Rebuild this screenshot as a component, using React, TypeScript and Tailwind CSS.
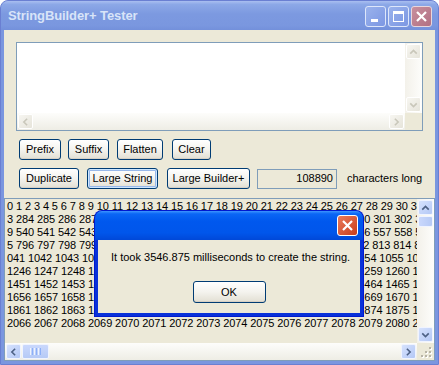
import React from 'react';

type Dir = 'up' | 'down' | 'left' | 'right';

const chevronPoints: Record<Dir, string> = {
  up: '4,10 8,6 12,10',
  down: '4,6 8,10 12,6',
  left: '10,4 6,8 10,12',
  right: '6,4 10,8 6,12',
};

const Chevron = ({ dir, color }: { dir: Dir; color: string }) => (
  <svg width="16" height="16" viewBox="0 0 16 16">
    <polyline points={chevronPoints[dir]} fill="none" stroke={color} strokeWidth="2" />
  </svg>
);

// luna scroll arrow button, blue when live, beige when the box is empty
const ScrollBtn = ({ dir, disabled }: { dir: Dir; disabled?: boolean }) => (
  <div className="w-[17px] h-[17px] p-px shrink-0">
    <div
      className={
        disabled
          ? 'w-full h-full rounded-[2px] border border-white bg-gradient-to-br from-[#F7F6F1] to-[#E6E4DA] flex items-center justify-center'
          : 'w-full h-full rounded-[2px] border border-[#F0F4FF] bg-gradient-to-br from-[#D6E2FD] to-[#B4C8F6] flex items-center justify-center'
      }
    >
      <Chevron dir={dir} color={disabled ? '#C9C7BA' : '#4D6185'} />
    </div>
  </div>
);

const XpButton = ({ label, className, focused }: { label: string; className: string; focused?: boolean }) => (
  <button
    className={`${className} h-[21px] shrink-0 rounded-[3px] border border-[#003C74] bg-gradient-to-b from-white via-[#F4F3EE] to-[#E2DFD3] text-[11px] leading-none text-black ${
      focused ? 'shadow-[inset_0_0_0_1px_#CEE7FF,inset_0_0_0_2px_#98B8EA]' : 'shadow-[inset_0_-1px_0_#D6D0C5]'
    }`}
  >
    {label}
  </button>
);

// the edit box breaks every 1024 chars and swallows a space at the break
const buildLines = () => {
  let s = '';
  for (let i = 0; s.length < 1100 * 10; i++) s += i + ' ';
  const lines: string[] = [];
  let pos = 0;
  for (let k = 0; k < 10; k++) {
    lines.push(s.slice(pos, pos + 110));
    pos += 1024;
    if (s[pos] === ' ') pos++;
  }
  return lines;
};

const lines = buildLines();

const Grip = () => (
  <svg width="17" height="17" viewBox="0 0 17 17">
    {[
      [12, 4],
      [8, 8],
      [12, 8],
      [4, 12],
      [8, 12],
      [12, 12],
    ].map(([x, y]) => (
      <g key={`${x}-${y}`}>
        <rect x={x + 1} y={y + 1} width="2" height="2" fill="#FFFFFF" />
        <rect x={x} y={y} width="2" height="2" fill="#B8B4A6" />
      </g>
    ))}
  </svg>
);

export default function App() {
  return (
    <div className="w-[439px] h-[365px] font-['Liberation_Sans',Arial,sans-serif] text-[11px] text-black">
      <div className="relative w-full h-full flex flex-col rounded-t-[8px] overflow-hidden bg-[#7A96DF] border border-[#6A7FD2]">
        {/* title bar (inactive) */}
        <div className="h-[29px] shrink-0 flex items-center pl-[7px] pr-[6px] bg-[linear-gradient(to_bottom,#A9BEF0_0%,#8CA8E7_12%,#7C99E0_45%,#7A97DF_85%,#7390DB_100%)]">
          <span className="text-[13px] font-bold text-[#D8E4F8] tracking-[-0.1px] mt-[1px]">StringBuilder+ Tester</span>
          <div className="ml-auto flex gap-[2px] mt-[1px]">
            <div className="w-[21px] h-[21px] rounded-[3px] border border-[#DDE6FA] bg-gradient-to-br from-[#9AB2EC] to-[#7C97E3] flex items-end pl-[5px] pb-[4px]">
              <div className="w-[7px] h-[3px] bg-white" />
            </div>
            <div className="w-[21px] h-[21px] rounded-[3px] border border-[#DDE6FA] bg-gradient-to-br from-[#9AB2EC] to-[#7C97E3] flex items-center justify-center">
              <div className="w-[11px] h-[11px] border border-white border-t-[3px]" />
            </div>
            <div className="w-[21px] h-[21px] rounded-[3px] border border-[#E8D6DC] bg-gradient-to-br from-[#C8909E] to-[#B27083] flex items-center justify-center">
              <svg width="13" height="13" viewBox="0 0 13 13">
                <path d="M2 2 L11 11 M11 2 L2 11" stroke="white" strokeWidth="2.2" />
              </svg>
            </div>
          </div>
        </div>

        {/* client area */}
        <div className="flex-1 mx-[3px] mb-[3px] bg-[#ECE9D8] flex flex-col">
          {/* input box, empty */}
          <div className="mt-[12px] ml-[12px] w-[407px] h-[89px] border border-[#7F9DB9] bg-white flex flex-col">
            <div className="flex-1 flex">
              <div className="flex-1" />
              <div className="w-[17px] flex flex-col justify-between bg-gradient-to-r from-[#F3F1EA] to-[#FDFDFB]">
                <ScrollBtn dir="up" disabled />
                <ScrollBtn dir="down" disabled />
              </div>
            </div>
            <div className="h-[17px] flex">
              <div className="flex-1 flex justify-between bg-gradient-to-b from-[#FDFDFB] to-[#EEEDE5]">
                <ScrollBtn dir="left" disabled />
                <ScrollBtn dir="right" disabled />
              </div>
              <div className="w-[17px] bg-[#ECE9D8]" />
            </div>
          </div>

          <div className="mt-[8px] ml-[15px] flex items-center">
            <XpButton label="Prefix" className="w-[42px]" />
            <XpButton label="Suffix" className="ml-[7px] w-[41px]" />
            <XpButton label="Flatten" className="ml-[8px] w-[46px]" />
            <XpButton label="Clear" className="ml-[9px] w-[39px]" />
          </div>

          <div className="mt-[8px] ml-[15px] flex items-center">
            <XpButton label="Duplicate" className="w-[60px]" />
            <XpButton label="Large String" className="ml-[8px] w-[71px]" focused />
            <XpButton label="Large Builder+" className="ml-[9px] w-[83px]" />
            <div className="ml-[7px] w-[80px] h-[20px] border border-[#7F9DB9] bg-[#ECE9D8] flex items-center justify-end pr-[3px]">
              108890
            </div>
            <span className="ml-[10px]">characters long</span>
          </div>

          {/* output box */}
          <div className="mt-[9px] flex-1 border border-[#7F9DB9] bg-[#ECE9D8] flex flex-col min-h-0">
            <div className="flex-1 flex min-h-0">
              <div className="flex-1 overflow-hidden pl-[2px] pt-px tracking-[-0.1px]">
                {lines.map((l, i) => (
                  <div key={i} className="h-[13px] leading-[13px] whitespace-pre">
                    {l}
                  </div>
                ))}
              </div>
              <div className="w-[17px] flex flex-col bg-gradient-to-r from-[#F3F1EA] to-[#FDFDFB]">
                <ScrollBtn dir="up" />
                <div className="h-[11px] px-px">
                  <div className="w-full h-full rounded-[2px] border border-[#F0F4FF] bg-gradient-to-r from-[#CAD8FC] to-[#B6CAF6]" />
                </div>
                <div className="flex-1" />
                <ScrollBtn dir="down" />
              </div>
            </div>
            <div className="h-[17px] flex">
              <div className="flex-1 flex bg-gradient-to-b from-[#FDFDFB] to-[#EEEDE5]">
                <ScrollBtn dir="left" />
                <div className="w-[27px] py-px">
                  <div className="w-full h-full rounded-[2px] border border-[#F0F4FF] bg-gradient-to-b from-[#CAD8FC] to-[#B6CAF6] flex items-center justify-center gap-px">
                    <div className="w-px h-[7px] bg-[#EEF4FE]" />
                    <div className="w-px h-[7px] bg-[#8CB0F8]" />
                    <div className="w-px h-[7px] bg-[#EEF4FE]" />
                    <div className="w-px h-[7px] bg-[#8CB0F8]" />
                    <div className="w-px h-[7px] bg-[#EEF4FE]" />
                    <div className="w-px h-[7px] bg-[#8CB0F8]" />
                  </div>
                </div>
                <div className="flex-1" />
                <ScrollBtn dir="right" />
              </div>
              <div className="w-[17px] bg-[#ECE9D8]">
                <Grip />
              </div>
            </div>
          </div>
        </div>

        {/* message box over the output */}
        <div className="absolute left-[94px] top-[210px] w-[268px] h-[105px] flex flex-col rounded-t-[7px] overflow-hidden bg-[#0831D9] shadow-[0_0_0_1px_#0019CF]">
          <div className="h-[29px] shrink-0 flex items-center justify-end pr-[5px] bg-[linear-gradient(to_bottom,#3D95FF_0%,#0A66F5_10%,#0058EE_35%,#0056EB_75%,#0048D8_100%)]">
            <div className="w-[21px] h-[21px] rounded-[3px] border border-white bg-gradient-to-br from-[#E97A5A] to-[#C93B17] flex items-center justify-center">
              <svg width="13" height="13" viewBox="0 0 13 13">
                <path d="M2 2 L11 11 M11 2 L2 11" stroke="white" strokeWidth="2.2" />
              </svg>
            </div>
          </div>
          <div className="flex-1 mx-[3px] mb-[3px] bg-[#ECE9D8] flex flex-col items-center">
            <p className="self-start ml-[13px] mt-[11px] leading-[13px]">It took 3546.875 milliseconds to create the string.</p>
            <XpButton label="OK" className="mt-[17px] w-[73px] h-[22px]" />
          </div>
        </div>
      </div>
    </div>
  );
}
